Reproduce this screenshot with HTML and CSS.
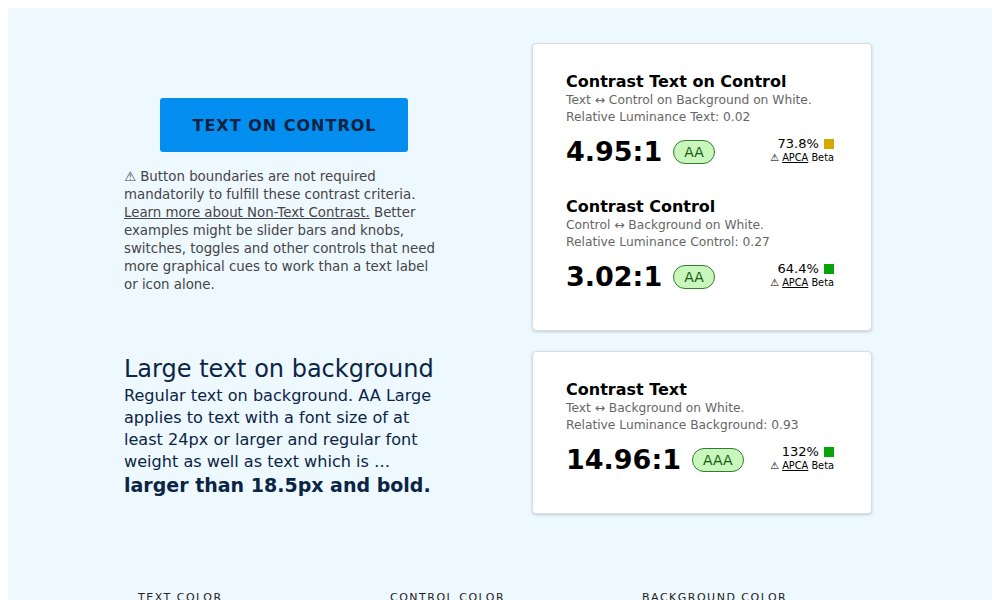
FILE: index.html
```html
<!DOCTYPE html>
<html lang="en">
<head>
<meta charset="utf-8">
<title>Contrast</title>
<link rel="stylesheet" href="styles.css">
</head>
<body>
<div class="page">
  <div class="grid">
    <div class="left-top">
      <div class="btn-wrap"><button class="control">TEXT ON CONTROL</button></div>
      <p class="note">⚠ Button boundaries are not required mandatorily to fulfill these contrast criteria. <a href="#">Learn more about Non-Text Contrast.</a> Better examples might be slider bars and knobs, switches, toggles and other controls that need more graphical cues to work than a text label or icon alone.</p>
    </div>
    <div class="card">
      <div class="section">
        <h3 class="title">Contrast Text on Control</h3>
        <p class="sub">Text ↔ Control on Background on White.</p>
        <p class="sub">Relative Luminance Text: 0.02</p>
        <div class="result">
          <span class="ratio">4.95:1</span>
          <span class="badge">AA</span>
          <div class="apca">
            <div class="pct">73.8% <span class="sq yellow"></span></div>
            <div class="beta">⚠ <a href="#">APCA</a> Beta</div>
          </div>
        </div>
      </div>
      <div class="section">
        <h3 class="title">Contrast Control</h3>
        <p class="sub">Control ↔ Background on White.</p>
        <p class="sub">Relative Luminance Control: 0.27</p>
        <div class="result">
          <span class="ratio">3.02:1</span>
          <span class="badge">AA</span>
          <div class="apca">
            <div class="pct">64.4% <span class="sq green"></span></div>
            <div class="beta">⚠ <a href="#">APCA</a> Beta</div>
          </div>
        </div>
      </div>
    </div>
    <div class="left-bottom">
      <div class="large">Large text on background</div>
      <p class="regular">Regular text on background. AA Large applies to text with a font size of at least 24px or larger and regular font weight as well as text which is …</p>
      <div class="bold">larger than 18.5px and bold.</div>
    </div>
    <div class="card">
      <div class="section">
        <h3 class="title">Contrast Text</h3>
        <p class="sub">Text ↔ Background on White.</p>
        <p class="sub">Relative Luminance Background: 0.93</p>
        <div class="result">
          <span class="ratio">14.96:1</span>
          <span class="badge">AAA</span>
          <div class="apca">
            <div class="pct">132% <span class="sq green"></span></div>
            <div class="beta">⚠ <a href="#">APCA</a> Beta</div>
          </div>
        </div>
      </div>
    </div>
  </div>
  <div class="labels">
    <div class="label">TEXT COLOR</div>
    <div class="label">CONTROL COLOR</div>
    <div class="label">BACKGROUND COLOR</div>
  </div>
</div>
</body>
</html>
```

FILE: styles.css
```css
html, body {
  margin: 0;
  padding: 0;
}
body {
  margin: 8px;
  font-family: "DejaVu Sans", Verdana, sans-serif;
  background: #ffffff;
}
.page {
  background: #eef8ff;
  min-height: 640px;
  padding: 35px 0 0 116px;
}
.grid {
  display: grid;
  grid-template-columns: 316px 340px;
  column-gap: 92px;
  row-gap: 20px;
  align-items: start;
}
.left-top {
  padding-top: 55px;
}
.btn-wrap {
  display: flex;
  justify-content: center;
  padding-left: 4px;
}
.control {
  width: 248px;
  height: 54px;
  border: none;
  border-radius: 3px;
  background: #038ef0;
  color: #0b2240;
  font-family: "DejaVu Sans", sans-serif;
  font-weight: bold;
  font-size: 16px;
  letter-spacing: 1px;
  padding: 0 0 0 1px;
}
.note {
  margin: 16px 0 0;
  font-size: 13.35px;
  line-height: 18px;
  color: #454545;
}
.note a {
  color: #454545;
}
.card {
  background: #ffffff;
  border: 1px solid #d6dde4;
  border-radius: 4px;
  box-shadow: 0 1px 3px rgba(0, 0, 0, 0.18);
  padding: 28px 37px 37px 33px;
}
.section + .section {
  margin-top: 29px;
}
.title {
  margin: 0;
  font-size: 16px;
  line-height: 19px;
  font-weight: bold;
  color: #000;
}
.sub {
  margin: 1px 0 0;
  font-size: 12.25px;
  line-height: 17px;
  color: #666;
}
.sub + .sub {
  margin-top: 0;
}
.result {
  display: flex;
  align-items: center;
  margin-top: 10px;
  height: 32px;
}
.ratio {
  font-size: 27px;
  font-weight: bold;
  color: #000;
  line-height: 32px;
}
.badge {
  margin-left: 11px;
  border: 1px solid #2f7d2f;
  background: #c9f7bb;
  color: #185c18;
  border-radius: 12px;
  font-size: 14px;
  line-height: 22px;
  padding: 0 10px;
}
.apca {
  margin-left: auto;
  text-align: right;
  color: #000;
  margin-top: -4px;
}
.pct {
  font-size: 13px;
  line-height: 15px;
}
.sq {
  display: inline-block;
  width: 10px;
  height: 10px;
  vertical-align: -1px;
  margin-left: 1px;
}
.yellow { background: #d4a900; }
.green { background: #06a306; }
.beta {
  font-size: 9.8px;
  line-height: 13px;
}
.beta a {
  color: #000;
}
.left-bottom {
  padding-top: 4px;
  color: #0b2545;
}
.large {
  font-size: 24px;
  line-height: 28px;
}
.regular {
  margin: 2px 0 0;
  font-size: 16.1px;
  line-height: 22px;
}
.bold {
  font-size: 19px;
  font-weight: bold;
  line-height: 25px;
}
.labels {
  display: grid;
  grid-template-columns: 252px 252px 252px;
  margin-top: 76.5px;
  padding-left: 14px;
}
.label {
  font-size: 11px;
  letter-spacing: 1.5px;
  color: #222;
}
```
